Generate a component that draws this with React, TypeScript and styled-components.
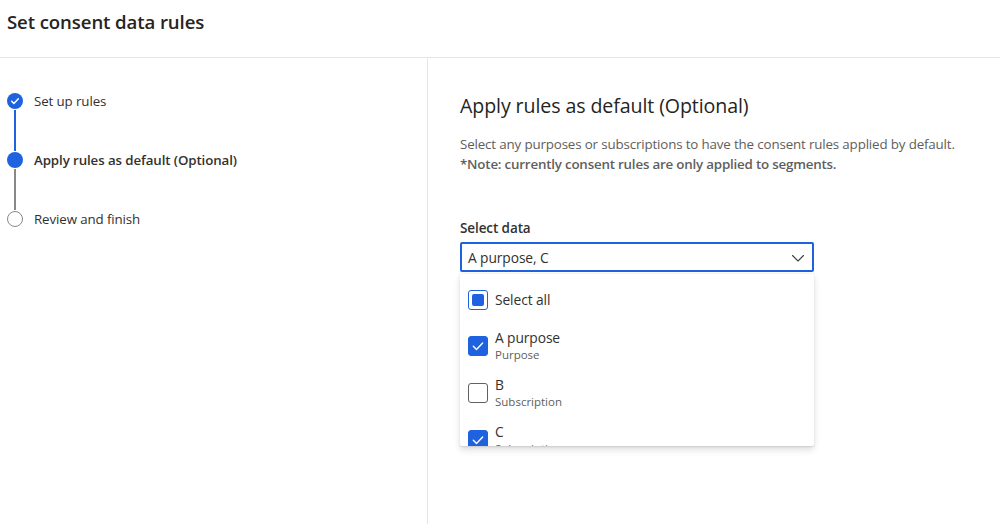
import React from "react";
import styled, { createGlobalStyle } from "styled-components";

const BLUE = "#1f62df";
const FONT = `"Open Sans", "Noto Sans", sans-serif`;

const Global = createGlobalStyle`
  html, body { margin: 0; padding: 0; background: #fff; }
  body { font-family: ${FONT}; color: #323130; }
  * { box-sizing: border-box; }
`;

const Page = styled.div`
  width: 1000px;
  height: 524px;
  display: flex;
  flex-direction: column;
  overflow: hidden;
`;

const Header = styled.header`
  height: 58px;
  flex: none;
  border-bottom: 1px solid #e6e6e6;
  padding: 9px 0 0 7px;
`;

const Title = styled.h1`
  margin: 0;
  font-size: 18.6px;
  font-weight: 600;
  letter-spacing: -0.1px;
  color: #252423;
  line-height: 26px;
`;

const Body = styled.div`
  flex: 1;
  display: flex;
`;

const StepsPanel = styled.nav`
  width: 428px;
  flex: none;
  border-right: 1px solid #e6e6e6;
  padding: 34px 0 0 7px;
  display: flex;
  flex-direction: column;
`;

const StepRow = styled.div`
  display: flex;
  align-items: center;
  height: 18px;
  gap: 11px;
`;

const StepConnector = styled.div<{ $done?: boolean }>`
  width: 2px;
  height: 41px;
  margin-left: 7px;
  background: ${(p) => (p.$done ? BLUE : "#8a8886")};
`;

const StepDot = styled.div<{ $state: "done" | "current" | "todo" }>`
  width: 16px;
  height: 16px;
  border-radius: 50%;
  flex: none;
  display: flex;
  align-items: center;
  justify-content: center;
  background: ${(p) => (p.$state === "todo" ? "#fff" : BLUE)};
  border: ${(p) => (p.$state === "todo" ? "1.5px solid #8a8886" : "none")};
`;

const StepLabel = styled.span<{ $current?: boolean }>`
  font-size: 13.3px;
  font-weight: ${(p) => (p.$current ? 600 : 400)};
  color: #323130;
  letter-spacing: -0.1px;
`;

const Content = styled.main`
  flex: 1;
  padding: 35px 0 0 32px;
  display: flex;
  flex-direction: column;
`;

const Heading = styled.h2`
  margin: 0;
  font-size: 19.6px;
  font-weight: 500;
  color: #252423;
  line-height: 26px;
  letter-spacing: -0.1px;
`;

const Description = styled.p`
  margin: 15px 0 0;
  font-size: 13.35px;
  line-height: 20px;
  color: #605e5c;
  letter-spacing: -0.15px;
`;

const Note = styled.strong`
  display: block;
  font-weight: 600;
  color: #605e5c;
  letter-spacing: -0.2px;
`;

const Field = styled.div`
  margin-top: 44px;
  width: 354px;
  display: flex;
  flex-direction: column;
`;

const FieldLabel = styled.label`
  font-size: 13.5px;
  font-weight: 600;
  color: #323130;
  line-height: 20px;
  margin-bottom: 4px;
  letter-spacing: -0.1px;
`;

const SelectBox = styled.div`
  height: 30px;
  border: 2px solid ${BLUE};
  border-radius: 2px;
  display: flex;
  align-items: center;
  justify-content: space-between;
  padding: 1px 6px 0 6px;
  font-size: 13.8px;
  color: #323130;
  letter-spacing: -0.1px;
`;

const ListBox = styled.div`
  margin-top: 2px;
  height: 172px;
  overflow: hidden;
  background: #fff;
  border-radius: 2px;
  box-shadow: 0 3.2px 7.2px rgba(0, 0, 0, 0.13), 0 0.6px 1.8px rgba(0, 0, 0, 0.11);
  padding-top: 4px;
`;

const Option = styled.div<{ $single?: boolean }>`
  height: ${(p) => (p.$single ? 44 : 47)}px;
  display: flex;
  align-items: center;
  gap: 7px;
  padding-left: 8px;
  flex: none;
`;

const OptionText = styled.div`
  display: flex;
  flex-direction: column;
`;

const OptionTitle = styled.span`
  font-size: 13.8px;
  line-height: 18px;
  color: #323130;
  letter-spacing: -0.1px;
`;

const OptionSub = styled.span`
  font-size: 11.5px;
  line-height: 15px;
  color: #605e5c;
`;

const Box = styled.div<{ $state: "checked" | "unchecked" | "mixed" }>`
  width: 20px;
  height: 20px;
  border-radius: 3px;
  flex: none;
  display: flex;
  align-items: center;
  justify-content: center;
  background: ${(p) => (p.$state === "checked" ? BLUE : "#fff")};
  border: 1px solid
    ${(p) => (p.$state === "unchecked" ? "#616161" : BLUE)};
`;

const MixedMark = styled.div`
  width: 12px;
  height: 12px;
  border-radius: 2px;
  background: ${BLUE};
`;

const Check = ({ size = 14, w = 1.2 }: { size?: number; w?: number }) => (
  <svg width={size} height={size} viewBox="0 0 12 12" fill="none">
    <path d="M2 6.3 L4.7 9 L10 3.4" stroke="#fff" strokeWidth={w} strokeLinecap="round" strokeLinejoin="round" />
  </svg>
);

const Chevron = () => (
  <svg width="16" height="16" viewBox="0 0 16 16" fill="none">
    <path d="M2.5 5.5 L8 11 L13.5 5.5" stroke="#424242" strokeWidth="1.1" strokeLinecap="round" strokeLinejoin="round" />
  </svg>
);

type Opt = { title: string; sub: string; checked: boolean };
const options: Opt[] = [
  { title: "A purpose", sub: "Purpose", checked: true },
  { title: "B", sub: "Subscription", checked: false },
  { title: "C", sub: "Subscription", checked: true },
];

export default function App() {
  return (
    <Page>
      <Global />
      <Header>
        <Title>Set consent data rules</Title>
      </Header>
      <Body>
        <StepsPanel>
          <StepRow>
            <StepDot $state="done">
              <Check size={10} w={1.8} />
            </StepDot>
            <StepLabel>Set up rules</StepLabel>
          </StepRow>
          <StepConnector $done />
          <StepRow>
            <StepDot $state="current" />
            <StepLabel $current>Apply rules as default (Optional)</StepLabel>
          </StepRow>
          <StepConnector />
          <StepRow>
            <StepDot $state="todo" />
            <StepLabel>Review and finish</StepLabel>
          </StepRow>
        </StepsPanel>
        <Content>
          <Heading>Apply rules as default (Optional)</Heading>
          <Description>
            Select any purposes or subscriptions to have the consent rules applied by default.
            <Note>*Note: currently consent rules are only applied to segments.</Note>
          </Description>
          <Field>
            <FieldLabel>Select data</FieldLabel>
            <SelectBox>
              <span>A purpose, C</span>
              <Chevron />
            </SelectBox>
            <ListBox>
              <Option $single>
                <Box $state="mixed">
                  <MixedMark />
                </Box>
                <OptionTitle>Select all</OptionTitle>
              </Option>
              {options.map((o) => (
                <Option key={o.title}>
                  <Box $state={o.checked ? "checked" : "unchecked"}>{o.checked && <Check />}</Box>
                  <OptionText>
                    <OptionTitle>{o.title}</OptionTitle>
                    <OptionSub>{o.sub}</OptionSub>
                  </OptionText>
                </Option>
              ))}
            </ListBox>
          </Field>
        </Content>
      </Body>
    </Page>
  );
}
